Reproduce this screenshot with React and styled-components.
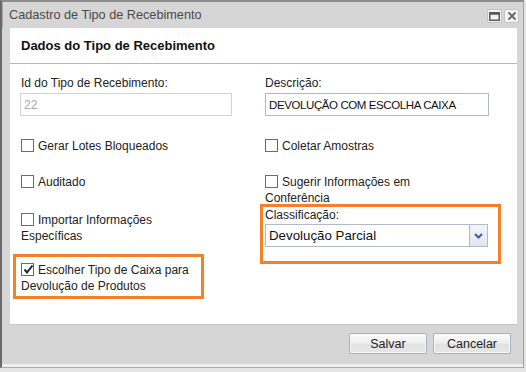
import React from 'react';
import styled, { createGlobalStyle } from 'styled-components';

const Global = createGlobalStyle`
  html, body { margin: 0; padding: 0; background: #e4e4e4; }
  body { font-family: "Liberation Sans", Arial, sans-serif; font-size: 12px; color: #222; }
  * { box-sizing: border-box; }
`;

const Window = styled.div`
  width: 524px;
  height: 368px;
  background: #d6d6d6;
  border-top: 2px solid #8c8c8c;
  border-left: 2px solid #6a6a6a;
  border-right: 1px solid #a3a3a3;
  border-bottom: 1px solid #a9a9a9;
  display: flex;
  flex-direction: column;
`;

const TitleBar = styled.div`
  height: 26px;
  flex: none;
  display: flex;
  align-items: center;
  justify-content: space-between;
  padding: 0 4px 0 7px;
  box-shadow: inset 1px 0 0 #a8a8a8;
`;

const Title = styled.span`
  font-size: 12.7px;
  color: #4a4a4a;
`;

const Tools = styled.div`
  display: flex;
  gap: 2px;
  margin-top: 2px;
`;

const ToolBtn = styled.div`
  width: 15px;
  height: 14px;
  border: 1px solid #c4c4c4;
  border-radius: 2px;
  background: #f3f3f3;
  display: flex;
  align-items: center;
  justify-content: center;
`;

const Panel = styled.div`
  margin-left: 8px;
  width: 507px;
  height: 296px;
  flex: none;
  background: #fff;
  box-shadow: 0 1px 0 #c8c8c8;
`;

const PanelHeader = styled.div`
  height: 36px;
  padding-left: 11px;
  display: flex;
  align-items: center;
  font-weight: bold;
  font-size: 13px;
  color: #111;
  border-bottom: 1px solid #99bbe8;
`;

const Form = styled.div`
  display: grid;
  grid-template-columns: 244px 244px;
  padding: 11px 0 0 11px;
`;

const Column = styled.div`
  display: flex;
  flex-direction: column;
  align-items: flex-start;
`;

const Label = styled.div`
  line-height: 16px;
  color: #222;
  white-space: nowrap;
`;

const TextInput = styled.div`
  margin-top: 2px;
  margin-left: ${p => p.$offset || 0}px;
  width: ${p => p.$w}px;
  height: 23px;
  border: 1px solid ${p => (p.$disabled ? '#d3d3d3' : '#b5b8c8')};
  background: #fff;
  color: ${p => (p.$disabled ? '#a8a8a8' : '#111')};
  padding-left: 3px;
  display: flex;
  align-items: center;
  white-space: nowrap;
  font-size: ${p => p.$fs || 12}px;
  letter-spacing: ${p => p.$ls || 0}px;
`;

const Check = styled.div`
  margin-top: ${p => p.$mt}px;
  line-height: 16px;
  color: #222;
  white-space: nowrap;
`;

const Box = styled.span`
  display: inline-block;
  width: 13px;
  height: 13px;
  border: 1px solid #6b6b6b;
  background: #fff;
  vertical-align: top;
  margin: 1px 4px 0 0;
  position: relative;
  svg { position: absolute; left: 0; top: -1px; }
`;

const Highlight = styled.div`
  margin-top: ${p => p.$mt}px;
  margin-left: ${p => p.$ml}px;
  width: ${p => p.$w}px;
  border: 3px solid #f58026;
  padding: ${p => p.$pad};
`;

const Select = styled.div`
  margin-top: 1px;
  display: flex;
  height: 23px;
`;

const SelectValue = styled.div`
  width: 205px;
  height: 23px;
  border: 1px solid #b5b8c8;
  padding-left: 3px;
  display: flex;
  align-items: center;
  font-size: 13.3px;
  color: #111;
`;

const Trigger = styled.div`
  width: 18px;
  height: 23px;
  border: 1px solid #b5b8c8;
  border-left: none;
  background: linear-gradient(#f4f5f8, #e4e6ec);
  display: flex;
  align-items: center;
  justify-content: center;
`;

const Footer = styled.div`
  height: 40px;
  flex: none;
  display: flex;
  justify-content: flex-end;
  align-items: flex-start;
  gap: 6px;
  padding: 9px 12px 0 0;
`;

const Button = styled.button`
  width: 78px;
  height: 21px;
  border: 1px solid #a7b1c3;
  border-radius: 2px;
  background: linear-gradient(#fbfbfb 0%, #efefef 48%, #e2e2e2 52%, #e6e6e6 100%);
  box-shadow: inset 0 0 0 1px #f7f7f7;
  font-family: "Liberation Sans", Arial, sans-serif;
  font-size: 12.5px;
  color: #222;
  padding: 0;
`;

const BottomStrip = styled.div`
  height: 3px;
  flex: none;
  background: #efefef;
`;

const CheckMark = () => (
  <svg width="13" height="13" viewBox="0 0 13 13">
    <path d="M2.5 6.5 L5 9.5 L10.5 2.5" fill="none" stroke="#222" strokeWidth="2" />
  </svg>
);

const CheckBox = ({ checked }) => <Box>{checked && <CheckMark />}</Box>;

export default function App() {
  return (
    <>
      <Global />
      <Window>
        <TitleBar>
          <Title>Cadastro de Tipo de Recebimento</Title>
          <Tools>
            <ToolBtn>
              <svg width="11" height="9" viewBox="0 0 11 9">
                <rect x="0.75" y="0.75" width="9.5" height="7.5" fill="none" stroke="#5a5a5a" strokeWidth="1.5" />
                <rect x="0.75" y="0.75" width="9.5" height="2" fill="#5a5a5a" />
              </svg>
            </ToolBtn>
            <ToolBtn>
              <svg width="10" height="10" viewBox="0 0 10 10">
                <path d="M1.5 1.5 L8.5 8.5 M8.5 1.5 L1.5 8.5" stroke="#666" strokeWidth="1.8" />
              </svg>
            </ToolBtn>
          </Tools>
        </TitleBar>
        <Panel>
          <PanelHeader>Dados do Tipo de Recebimento</PanelHeader>
          <Form>
            <Column>
              <Label>Id do Tipo de Recebimento:</Label>
              <TextInput $w={212} $offset={-1} $disabled>22</TextInput>
              <Check $mt={22}><CheckBox />Gerar Lotes Bloqueados</Check>
              <Check $mt={20}><CheckBox />Auditado</Check>
              <Check $mt={22}><CheckBox />Importar Informações<br />Específicas</Check>
              <Highlight $mt={10} $ml={-8} $w={191} $pad="5px 0 2px 5px">
                <Check $mt={0}><CheckBox checked />Escolher Tipo de Caixa para<br />Devolução de Produtos</Check>
              </Highlight>
            </Column>
            <Column>
              <Label>Descrição:</Label>
              <TextInput $w={224} $fs={11.5} $ls={-0.4}>DEVOLUÇÃO COM ESCOLHA CAIXA</TextInput>
              <Check $mt={22}><CheckBox />Coletar Amostras</Check>
              <Check $mt={20}><CheckBox />Sugerir Informações em<br />Conferência</Check>
              <Highlight $mt={-2} $ml={-5} $w={241} $pad="0 0 14px 2px">
                <Label>Classificação:</Label>
                <Select>
                  <SelectValue>Devolução Parcial</SelectValue>
                  <Trigger>
                    <svg width="9" height="6" viewBox="0 0 9 6">
                      <path d="M1 1 L4.5 4.5 L8 1" fill="none" stroke="#3b5e96" strokeWidth="2" />
                    </svg>
                  </Trigger>
                </Select>
              </Highlight>
            </Column>
          </Form>
        </Panel>
        <Footer>
          <Button>Salvar</Button>
          <Button>Cancelar</Button>
        </Footer>
        <BottomStrip />
      </Window>
    </>
  );
}
